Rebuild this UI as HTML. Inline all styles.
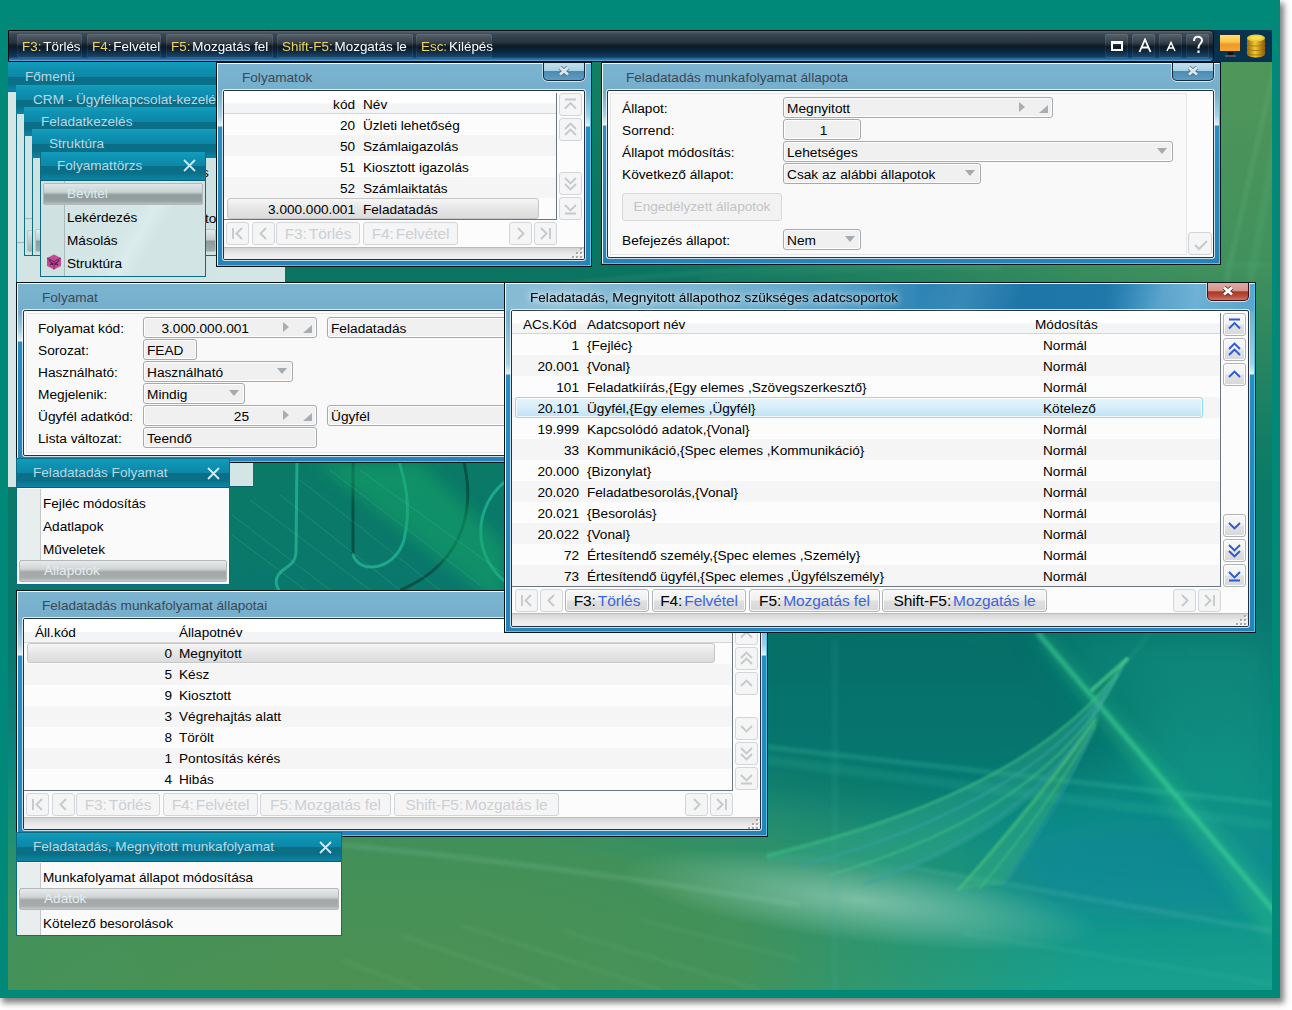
<!DOCTYPE html><html><head><meta charset="utf-8"><style>
*{box-sizing:border-box;margin:0;padding:0}
html,body{width:1292px;height:1010px;overflow:hidden;background:#fff;font-family:"Liberation Sans",sans-serif;font-size:13.6px;color:#000}
.a{position:absolute;white-space:nowrap}
#frame{position:absolute;left:0;top:0;width:1280px;height:998px;background:#008878;box-shadow:3px 4px 6px 1px rgba(0,0,0,.5)}
#desk{position:absolute;left:8px;top:30px;width:1264px;height:960px;overflow:hidden;
 background:linear-gradient(180deg,#3f8e55 0%,#2b8a5e 40%,#0b7a6e 62%,#0e8c85 80%,#18a092 100%);}
#tb{position:absolute;z-index:1;left:8px;top:30px;width:1206px;height:32px;border:1px solid #05080c;border-radius:0 4px 4px 0;
 background:linear-gradient(180deg,#5a6874 0%,#3a4854 10%,#27333e 38%,#0c1a26 50%,#0a2640 68%,#0e3a5e 85%,#2a78b0 95%,#60b8e8 100%)}
#tbr{position:absolute;left:1200px;top:30px;width:72px;height:32px;background:#063350}
.tbtn{position:absolute;top:3px;height:24px;border-radius:2px;background:linear-gradient(180deg,rgba(255,255,255,.14),rgba(255,255,255,.05) 45%,rgba(0,0,0,.08) 55%,rgba(255,255,255,.06));box-shadow:inset 0 0 0 1px rgba(255,255,255,.07);color:#fff;font-size:13.4px;line-height:26px;padding-left:5px;white-space:nowrap}
.tbtn b{font-weight:normal;color:#ecd468;margin-right:2px}
.win{position:absolute;border:1px solid #0a1218;
 background:linear-gradient(180deg,#7cb4d0 0px,#74aecb 30px,#a4d0e4 calc(var(--g) - 10px),#e2f2f8 var(--g),#2a8cc0 calc(var(--g) + 1px),#2484b8 100%)}
.win:before{content:"";position:absolute;left:0;top:0;right:0;bottom:0;border:1px solid rgba(255,255,255,.9);border-right-color:#38d0f4;border-bottom-color:#38d0f4}
.ttl{position:absolute;top:6px;color:#3c4856;font-size:13.6px;line-height:17px;white-space:nowrap}
.xb{position:absolute;top:0;width:42px;height:18px;border:1px solid #182838;border-top:none;border-radius:0 0 5px 5px;
 background:linear-gradient(180deg,#c4e0ee 0%,#a8d0e4 45%,#4c8cb4 50%,#5e9cc0 100%);box-shadow:0 1px 0 rgba(255,255,255,.7),-1px 0 0 rgba(255,255,255,.5),1px 0 0 rgba(255,255,255,.5)}
.xb svg{position:absolute;left:13px;top:2px}

.win.act{background:linear-gradient(95deg,#84bad4 0px,#7ab4d0 200px,#5aa2c8 330px,#2c84b4 420px,#1e76a8 520px,#2078aa 600px,#3a90c0 640px,#6cb0d4 690px,#5ca4cc 751px) 0 0/100% 28px no-repeat,linear-gradient(180deg,#7cb4d0 0px,#74aecb 30px,#a4d0e4 calc(var(--g) - 10px),#e2f2f8 var(--g),#2a8cc0 calc(var(--g) + 1px),#2484b8 100%)}
.win.act:after{content:"";position:absolute;left:1px;right:1px;top:1px;height:27px;background:linear-gradient(115deg,rgba(255,255,255,0) 0px,rgba(255,255,255,.12) 60px,rgba(255,255,255,0) 100px,rgba(255,255,255,0) 380px,rgba(255,255,255,.08) 420px,rgba(255,255,255,0) 470px,rgba(255,255,255,0) 560px,rgba(255,255,255,.1) 600px,rgba(255,255,255,0) 640px)}
.win.act .ttl{color:#000;text-shadow:0 0 6px rgba(255,255,255,.9),0 0 10px rgba(255,255,255,.6);z-index:2}
.win.act .xb{background:linear-gradient(180deg,#e0aaa4 0%,#d4958c 45%,#a83828 52%,#b84a38 75%,#c87868 100%);border-color:#401010;z-index:2}


.pnl{position:absolute;background:#fcfcfc;border:1px solid #26323e;border-radius:2px;box-shadow:0 0 0 1px rgba(255,255,255,.75);overflow:hidden}
.hd{position:absolute;left:0;top:0;height:23px;border-bottom:1px solid #d6d6d6;background:linear-gradient(180deg,#fff 0,#fff 55%,#f3f4f6 58%,#f3f4f6 100%)}
.rw{position:absolute;left:0;height:21px}
.r0{background:#fcfcfc}.r1{background:#f5f5f5}
.t{position:absolute;white-space:nowrap;line-height:21px;margin-top:1px;font-size:13.6px;color:#000}
.rt{text-align:right}
.sel{position:absolute;border:1px solid #c6c6c6;border-radius:3px;background:linear-gradient(180deg,#f6f6f6 0%,#e6e6e6 50%,#dcdcdc 100%)}
.selb{position:absolute;border:1px solid #90d8f8;border-radius:3px;background:linear-gradient(180deg,#e6f4fc 0%,#d8eefa 50%,#bee2f6 100%);box-shadow:inset 0 0 0 1px rgba(255,255,255,.8)}
.vl{position:absolute;width:1px;background:#6c7680}
.hl{position:absolute;height:1px;background:#6c7680}
.bt{position:absolute;width:23px;height:23px;border:1px solid #d2d6da;border-radius:3px;background:#f5f5f5}
.bt svg{position:absolute;left:0;top:0}
.bt.ac{border-color:#b0b4b8;background:linear-gradient(180deg,#f8f8f8 0%,#f2f2f2 48%,#e2e2e2 52%,#d8d8d8 100%);box-shadow:inset 0 0 0 1px rgba(255,255,255,.9)}
.nb{position:absolute;height:23px;border:1px solid #d2d6da;border-radius:3px;background:#f5f5f5;color:#ccd0d4;font-size:15.5px;line-height:21px;text-align:center;white-space:nowrap;letter-spacing:-.1px}
.nb.ac{border-color:#b0b4b8;background:linear-gradient(180deg,#f8f8f8 0%,#f0f0f0 48%,#e0e0e0 52%,#d6d6d6 100%);color:#000;box-shadow:inset 0 0 0 1px rgba(255,255,255,.8)}
.nb.ac i{color:#3c64dc;font-style:normal}
.nb i{font-style:normal;margin-left:2px}
.stb{position:absolute;left:0;height:13px;border-top:1px solid #bcbcbc;background:linear-gradient(180deg,#d4d4d4 0%,#ececec 60%,#f0f0f0 100%)}
.frm{position:absolute;border:1px solid #e6e6e6;background:#f9f9f9}
.lb{position:absolute;white-space:nowrap;font-size:13.7px;line-height:20px;margin-top:1px}
.fd{position:absolute;height:21px;margin-top:-1px;border:1px solid #a6aaae;border-radius:3px;background:#f0f0f0;box-shadow:inset 0 0 0 1px #fff;font-size:13.7px;line-height:18px;padding-top:2px;padding-left:3px;white-space:nowrap;overflow:hidden}
.dd:after{content:"";position:absolute;right:5px;top:6px;border-left:5.5px solid transparent;border-right:5.5px solid transparent;border-top:6px solid #a4aaae}
.lk .ar{position:absolute;right:27px;top:4px;border-top:5px solid transparent;border-bottom:5px solid transparent;border-left:6px solid #a8aeb2}
.lk .cr{position:absolute;right:4px;top:7px;width:0;height:0;border-left:9px solid transparent;border-bottom:8px solid #a8aeb2}
.mn{position:absolute;border:1px solid #0b6c84;background:#fafafa}
.mh{position:absolute;left:0;top:0;right:0;height:29px;background:linear-gradient(180deg,#139dbc 0%,#0f93b3 18%,#0c87a7 50%,#0a6e87 52%,#0a6f88 76%,#0b7b97 86%,#0c84a2 100%);border-bottom:1px solid #0a6078}
.mt{position:absolute;top:0;line-height:28px;color:#b8d8e6;font-size:13.6px;white-space:nowrap}
.mx{position:absolute;top:7px;width:13px;height:13px}
.ic{position:absolute;left:0;width:24px;background:#e8eeee;border-right:1px solid #c4c8c8}
.mi{position:absolute;white-space:nowrap;font-size:13.6px;line-height:23px}
.sh{background:linear-gradient(180deg,#139dbc 0%,#0f93b3 18%,#0c87a7 50%,#0a6e87 52%,#0a6f88 76%,#0b7b97 86%,#0c84a2 100%)}
.msel{position:absolute;border:1px solid #b4b8b8;border-radius:2px;background:linear-gradient(180deg,#e6eaea 0%,#d0d4d4 40%,#a4a8a8 55%,#a8acac 85%,#c4c8c8 100%);color:#e4eef0;font-size:13.6px;line-height:20px;white-space:nowrap}
</style></head><body>
<div id="frame"></div><div id="desk"></div>
<svg class="a" style="left:8px;top:30px" width="1264" height="960" viewBox="8 30 1264 960">
<defs>
<linearGradient id="bg1" x1="0" y1="0" x2="0" y2="1">
<stop offset="0" stop-color="#0c7c62"/><stop offset=".26" stop-color="#0b7460"/><stop offset=".45" stop-color="#0a7a66"/>
<stop offset=".64" stop-color="#0a7670"/><stop offset=".80" stop-color="#0c8a82"/><stop offset="1" stop-color="#18a08e"/></linearGradient>
<radialGradient id="gtr" cx="0" cy="0" r="1" gradientUnits="userSpaceOnUse" gradientTransform="translate(1230 60) rotate(8) scale(720 420)"><stop offset="0" stop-color="#50965a" stop-opacity="1"/><stop offset=".5" stop-color="#4a955c" stop-opacity=".85"/><stop offset="1" stop-color="#3a9060" stop-opacity="0"/></radialGradient>
<radialGradient id="gl" cx="0" cy="0" r="1" gradientUnits="userSpaceOnUse" gradientTransform="translate(330 1010) rotate(-6) scale(760 300)"><stop offset="0" stop-color="#4e9050" stop-opacity="1"/><stop offset=".55" stop-color="#4a9052" stop-opacity=".85"/><stop offset="1" stop-color="#3a9058" stop-opacity="0"/></radialGradient>
<radialGradient id="hz" cx=".5" cy=".5" r=".5"><stop offset="0" stop-color="#c8eadc" stop-opacity=".5"/><stop offset="1" stop-color="#d0f0e0" stop-opacity="0"/></radialGradient>
<linearGradient id="gr" x1="0" y1="0" x2="1" y2="0"><stop offset="0" stop-color="#38c080" stop-opacity="0"/><stop offset=".5" stop-color="#38c080" stop-opacity=".9"/><stop offset="1" stop-color="#38c080" stop-opacity="0"/></linearGradient>
<filter id="bl" x="-20%" y="-20%" width="140%" height="140%"><feGaussianBlur stdDeviation="2"/></filter>
<filter id="bl1" x="-20%" y="-20%" width="140%" height="140%"><feGaussianBlur stdDeviation="1"/></filter><filter id="bl20" x="-50%" y="-50%" width="200%" height="200%"><feGaussianBlur stdDeviation="20"/></filter>
<filter id="bl6" x="-20%" y="-50%" width="140%" height="200%"><feGaussianBlur stdDeviation="8"/></filter>
</defs>
<rect x="8" y="30" width="1264" height="960" fill="url(#bg1)"/>
<rect x="8" y="30" width="1264" height="960" fill="url(#gtr)"/>
<rect x="8" y="30" width="1264" height="960" fill="url(#gl)"/>
<ellipse cx="900" cy="700" rx="260" ry="110" fill="#06665e" opacity=".45" filter="url(#bl20)"/>
<ellipse cx="1160" cy="870" rx="160" ry="50" fill="#0880a0" opacity=".45" filter="url(#bl20)"/>
<path d="M1040 632 L1272 632 L1272 915z" fill="#18a088" opacity=".35" filter="url(#bl20)"/>
<ellipse cx="0" cy="0" rx="1" ry="1" fill="url(#hz)" transform="translate(860 900) rotate(7) scale(240 42)"/>
<g filter="url(#bl)" fill="none">
<path d="M1276 60 L1226 282" stroke="#78d098" stroke-width="2" opacity=".35"/>
<path d="M1280 120 L1250 282" stroke="#60c088" stroke-width="8" opacity=".15"/>
<path d="M560 285 C700 270 850 262 1000 268" stroke="#70c8a0" stroke-width="2" opacity=".3"/>
<path d="M700 280 C850 268 1000 262 1272 265" stroke="#70c8a0" stroke-width="1.5" opacity=".25"/>
<path d="M1034 632 L1044 632 L1280 900 L1280 950 z" fill="#30c888" opacity=".35" filter="url(#bl6)"/>
<path d="M1150 632 L1098 700" stroke="#40c890" stroke-width="2" opacity=".3"/>
<path d="M1037 632 L1280 918" stroke="#48e098" stroke-width="3" opacity=".85"/>
<path d="M767 747 L1272 804" stroke="#48c8a8" stroke-width="2" opacity=".6"/>
<path d="M767 760 L1272 825" stroke="#40c0a0" stroke-width="10" opacity=".15"/>
<path d="M904 866 L1272 931" stroke="#90e0d0" stroke-width="1.5" opacity=".4"/>
<path d="M962 933 L1272 984" stroke="#90e0d0" stroke-width="1.2" opacity=".3"/>
<path d="M342 845 C500 860 650 880 800 905" stroke="#a8e0c8" stroke-width="3" opacity=".25"/>
<path d="M400 935 L560 990" stroke="#a0d8b0" stroke-width="1.2" opacity=".35"/>
<path d="M460 925 L660 990" stroke="#a0d8b0" stroke-width="1.2" opacity=".3"/>
<path d="M560 930 L760 990" stroke="#a0d8b0" stroke-width="1.2" opacity=".3"/>
<path d="M640 920 L800 960" stroke="#a0d8b0" stroke-width="1.2" opacity=".3"/>
<path d="M342 960 L420 990" stroke="#a0d8b0" stroke-width="1.2" opacity=".3"/>
<path d="M835 640 L835 990" stroke="#40b0a0" stroke-width="6" opacity=".15"/>
</g>
<path d="M1127 659 Q1040 790 767 852 L767 862 Q900 860 870 884 Q1060 820 1108 690z" fill="#3aae90" opacity=".35" filter="url(#bl1)"/>
<path d="M1100 712 Q1040 790 958 890 L1005 884 Q1060 800 1096 730z" fill="#48b880" opacity=".35" filter="url(#bl1)"/>
<g fill="none" filter="url(#bl1)" stroke-linecap="round">
<path d="M1127 659 Q1040 790 767 856" stroke="#40c080" stroke-width="3" opacity=".55"/>
<path d="M1122 668 Q1045 800 800 866" stroke="#3aa0a8" stroke-width="3" opacity=".5"/>
<path d="M1118 675 Q1050 810 830 875" stroke="#48c888" stroke-width="2.5" opacity=".5"/>
<path d="M1112 682 Q1055 815 865 884" stroke="#3a98b0" stroke-width="2.5" opacity=".45"/>
<path d="M1127 659 L1092 690" stroke="#60d890" stroke-width="4" opacity=".6"/>
<path d="M1095 720 Q1040 800 958 890" stroke="#50c878" stroke-width="3" opacity=".55"/>
<path d="M1095 725 Q1050 805 980 888" stroke="#48c080" stroke-width="2.5" opacity=".5"/>
<path d="M1092 730 Q1060 810 1005 884" stroke="#2a90b0" stroke-width="2.5" opacity=".5"/>
</g>
<g fill="none" stroke-linecap="round">
<path d="M297 455 L296 553 C295 566 285 566 279 574 C274 580 276 586 280 592" stroke="#22b090" stroke-width="3" opacity=".85"/>
<path d="M353 455 L353 555" stroke="#054a3c" stroke-width="3" opacity=".8"/>
<path d="M353 555 C360 575 395 570 404 540 C412 505 405 480 397 455" stroke="#22b090" stroke-width="3" opacity=".85"/>
<path d="M462 455 C475 500 470 560 401 590" stroke="#054a3c" stroke-width="3" opacity=".8"/>
<path d="M510 478 C470 505 472 560 510 585" stroke="#22b090" stroke-width="3" opacity=".85"/>
</g>
<path d="M315 462 L505 610 L505 545 L420 462z" fill="#18a868" opacity=".5" filter="url(#bl6)"/>
<g stroke="#60d0a0" stroke-width="1" opacity=".22">
<path d="M232 515 L330 590"/><path d="M232 535 L305 590"/><path d="M250 500 L370 590"/><path d="M280 495 L400 590"/><path d="M300 480 L440 590"/><path d="M330 470 L480 585"/><path d="M360 470 L505 575"/>
</g>
</svg>
<div id="tb">
<div class="tbtn" style="left:8px;width:65px"><b>F3:</b>Törlés</div>
<div class="tbtn" style="left:78px;width:74px"><b>F4:</b>Felvétel</div>
<div class="tbtn" style="left:157px;width:107px"><b>F5:</b>Mozgatás fel</div>
<div class="tbtn" style="left:268px;width:136px"><b>Shift-F5:</b>Mozgatás le</div>
<div class="tbtn" style="left:407px;width:76px"><b>Esc:</b>Kilépés</div>
<div class="tbtn" style="left:1096px;width:23px"></div>
<div class="tbtn" style="left:1123px;width:23px"></div>
<div class="tbtn" style="left:1150px;width:23px"></div>
<div class="tbtn" style="left:1177px;width:23px"></div>
<div class="a" style="left:1102px;top:10px;width:12px;height:10px;border:2px solid #fff;border-top-width:3px"></div>
<svg class="a" style="left:1129px;top:7px" width="14" height="15" viewBox="0 0 14 15"><path d="M1.5 14L7 1.5 12.5 14M3.8 9.5h6.4" stroke="#fff" stroke-width="1.8" fill="none"/></svg>
<svg class="a" style="left:1157px;top:10px" width="10" height="11" viewBox="0 0 10 11"><path d="M1 10L5 1.5 9 10M2.6 7h4.8" stroke="#fff" stroke-width="1.5" fill="none"/></svg>
<svg class="a" style="left:1182px;top:4px" width="14" height="20" viewBox="0 0 14 20"><path d="M3 6c0-3 2-4.3 4-4.3s4 1.3 4 3.8c0 2.8-3.5 3.5-3.5 6.8v1.2" stroke="#fff" stroke-width="2" fill="none"/><rect x="6.4" y="15.5" width="2.2" height="2.4" fill="#fff"/></svg>
</div><div id="tbr"></div>
<div class="a" style="left:1219px;top:34px;width:22px;height:18px;background:#2a2a2a;border-radius:1px"></div>
<div class="a" style="left:1220px;top:35px;width:20px;height:16px;background:linear-gradient(180deg,#ffe070 0%,#f8c850 40%,#f09828 60%,#f8a830 100%)"></div>
<div class="a" style="left:1228px;top:52px;width:5px;height:3px;background:#111"></div>
<div class="a" style="left:1225px;top:55px;width:11px;height:2px;background:#555"></div>
<svg class="a" style="left:1246px;top:34px" width="20" height="24" viewBox="0 0 20 24"><defs><linearGradient id="dbg" x1="0" x2="1"><stop offset="0" stop-color="#9a6808"/><stop offset=".45" stop-color="#f0c830"/><stop offset="1" stop-color="#8a5a06"/></linearGradient></defs><path d="M1 4v16c0 2 4 3.5 9 3.5s9-1.5 9-3.5V4z" fill="url(#dbg)"/><ellipse cx="10" cy="4" rx="9" ry="3.5" fill="#e8c840"/><ellipse cx="10" cy="3.6" rx="6" ry="2.2" fill="#f8e048"/><path d="M1 9c0 2 4 3 9 3s9-1 9-3M1 13.5c0 2 4 3 9 3s9-1 9-3M1 18c0 2 4 3 9 3s9-1 9-3" stroke="#a07010" stroke-width=".8" fill="none"/></svg>
<div class="a" style="left:8px;top:92px;width:277px;height:191px;background:#d4e5e5"></div>
<div class="a" style="left:8px;top:92px;width:8px;height:395px;background:#d6e6e6"></div>
<div class="a" style="left:229px;top:462px;width:24px;height:25px;background:#d4e5e5;border-bottom:1px solid #0a6070"></div>
<div class="a" style="left:16px;top:114px;width:200px;height:170px;background:#d2e4e4;border-left:1px solid #0b6f86"></div>
<div class="a" style="left:17px;top:242px;width:7px;height:1px;background:#a8b4b4"></div>
<div class="a" style="left:24px;top:136px;width:192px;height:120px;background:#d0e3e3;border-left:1px solid #0b6f86;border-bottom:1px solid #0b6f86"></div>
<div class="a" style="left:27px;top:230px;width:10px;height:22px;border:1px solid #b8c0c0;border-radius:2px;background:linear-gradient(180deg,#e0e6e6,#a8b0b0)"></div>
<div class="a" style="left:25px;top:218px;width:7px;height:1px;background:#a8b4b4"></div>
<div class="a" style="left:32px;top:158px;width:184px;height:98px;background:#cfe2e2;border-left:1px solid #0b6f86;border-bottom:1px solid #0b6f86"></div>
<div class="a" style="left:35px;top:229px;width:181px;height:23px;border:1px solid #b8c0c0;border-radius:2px;background:linear-gradient(180deg,#e4eaea 0%,#c4cccc 45%,#8e9a9a 55%,#a0aaaa 100%)"></div>
<div class="a" style="left:205px;top:209px;font-size:13.6px;line-height:20px;color:#000">to</div>
<div class="a" style="left:202px;top:163px;font-size:13.6px;line-height:20px;color:#000">s</div>
<div class="a sh" style="left:8px;top:62px;width:208px;height:29px;overflow:hidden"><div class="mt" style="left:17px;top:1px">Főmenü</div></div>
<div class="a sh" style="left:16px;top:85px;width:200px;height:29px;overflow:hidden"><div class="mt" style="left:17px;top:1px">CRM - Ügyfélkapcsolat-kezelés</div></div>
<div class="a sh" style="left:24px;top:107px;width:192px;height:29px;overflow:hidden"><div class="mt" style="left:17px;top:1px">Feladatkezelés</div></div>
<div class="a sh" style="left:32px;top:129px;width:184px;height:29px;overflow:hidden"><div class="mt" style="left:17px;top:1px">Struktúra</div></div>
<div class="mn" style="left:40px;top:151px;width:166px;height:126px;background:linear-gradient(120deg,#d2e4e4 0%,#d4e6e6 55%,#dcecec 62%,#d2e4e4 70%)">
<div class="mh"></div><div class="mt" style="left:16px">Folyamattörzs</div><svg class="mx" style="left:142px" viewBox="0 0 13 13"><path d="M1 1l11 11M12 1L1 12" stroke="#d0e8f2" stroke-width="1.8"/></svg>
<div class="ic" style="top:29px;height:95px;background:#cfe1e1;border-right-color:#a8baba"></div>
<div class="msel" style="left:2px;top:31px;width:160px;height:22px;padding-left:23px;background:linear-gradient(180deg,#e0e8e8 0%,#c8d2d2 40%,#909c9c 55%,#96a2a2 85%,#b4c0c0 100%);color:#d8ecf0">Bevitel</div>
<div class="mi" style="left:26px;top:54px">Lekérdezés</div><div class="mi" style="left:26px;top:77px">Másolás</div><div class="mi" style="left:26px;top:100px">Struktúra</div>
<svg class="a" style="left:5px;top:102px" width="16" height="16" viewBox="0 0 16 16"><path d="M8 0.5L15 4v8l-7 3.5L1 12V4z" fill="#c04c94"/><path d="M1 4l7 3.5L15 4M8 7.5v8" stroke="#7a2060" stroke-width="1" fill="none"/><path d="M3 6l4 5M13 6l-4 5M4 11l3-2M12 11l-3-2" stroke="#5a1848" stroke-width="1.2"/></svg>
</div>
<div class="win" style="left:216px;top:62px;width:376px;height:205px;--g:63px">
<div class="ttl" style="left:25px">Folyamatok</div>
<div class="xb" style="left:326px"><svg width="14" height="12" viewBox="0 0 14 12"><path d="M3 2.5l8 7M11 2.5l-8 7" stroke="#4a6a80" stroke-width="4.6" opacity=".75"/><path d="M3 2.5l8 7M11 2.5l-8 7" stroke="#dce8ee" stroke-width="2.8"/></svg></div>
<div class="pnl" style="left:6px;top:27px;width:362px;height:170px">
<div class="hd" style="width:332px"></div>
<div class="t rt" style="left:0;width:131px;top:2px">kód</div><div class="t" style="left:139px;top:2px">Név</div>
<div class="rw r0" style="top:23px;width:332px"></div>
<div class="t rt" style="left:0;width:131px;top:23px">20</div><div class="t" style="left:139px;top:23px">Üzleti lehetőség</div>
<div class="rw r1" style="top:44px;width:332px"></div>
<div class="t rt" style="left:0;width:131px;top:44px">50</div><div class="t" style="left:139px;top:44px">Számlaigazolás</div>
<div class="rw r0" style="top:65px;width:332px"></div>
<div class="t rt" style="left:0;width:131px;top:65px">51</div><div class="t" style="left:139px;top:65px">Kiosztott igazolás</div>
<div class="rw r1" style="top:86px;width:332px"></div>
<div class="t rt" style="left:0;width:131px;top:86px">52</div><div class="t" style="left:139px;top:86px">Számlaiktatás</div>
<div class="rw r0" style="top:107px;width:332px"></div>
<div class="sel" style="left:3px;top:107px;width:312px;height:21px"></div>
<div class="t rt" style="left:0;width:131px;top:107px">3.000.000.001</div><div class="t" style="left:139px;top:107px">Feladatadás</div>
<div class="vl" style="left:332px;top:2px;height:126px"></div>
<div class="hl" style="left:0;top:128px;width:333px"></div>
<div class="bt" style="left:335px;top:2px"><svg width="21" height="21" viewBox="0 0 21 21"><path d="M5 5.5h11M5 14.5l5.5-5.5 5.5 5.5" fill="none" stroke="#c4cacd" stroke-width="1.9"/></svg></div><div class="bt" style="left:335px;top:27px"><svg width="21" height="21" viewBox="0 0 21 21"><path d="M5 10l5.5-5.5L16 10M5 16l5.5-5.5L16 16" fill="none" stroke="#c4cacd" stroke-width="1.9"/></svg></div><div class="bt" style="left:335px;top:81px"><svg width="21" height="21" viewBox="0 0 21 21"><path d="M5 5l5.5 5.5L16 5M5 11l5.5 5.5L16 11" fill="none" stroke="#c4cacd" stroke-width="1.9"/></svg></div><div class="bt" style="left:335px;top:106px"><svg width="21" height="21" viewBox="0 0 21 21"><path d="M5 7l5.5 5.5L16 7M5 15.5h11" fill="none" stroke="#c4cacd" stroke-width="1.9"/></svg></div>
<div class="bt" style="left:2px;top:131px"><svg width="21" height="21" viewBox="0 0 21 21"><path d="M6 5v11M15 5l-5.5 5.5L15 16" fill="none" stroke="#c4cacd" stroke-width="1.9"/></svg></div><div class="bt" style="left:28px;top:131px"><svg width="21" height="21" viewBox="0 0 21 21"><path d="M13 5l-5.5 5.5L13 16" fill="none" stroke="#c4cacd" stroke-width="1.9"/></svg></div>
<div class="nb" style="left:52px;top:131px;width:84px">F3:<i>Törlés</i></div><div class="nb" style="left:139px;top:131px;width:95px">F4:<i>Felvétel</i></div>
<div class="bt" style="left:285px;top:131px"><svg width="21" height="21" viewBox="0 0 21 21"><path d="M8 5l5.5 5.5L8 16" fill="none" stroke="#c4cacd" stroke-width="1.9"/></svg></div><div class="bt" style="left:310px;top:131px"><svg width="21" height="21" viewBox="0 0 21 21"><path d="M15 5v11M6 5l5.5 5.5L6 16" fill="none" stroke="#c4cacd" stroke-width="1.9"/></svg></div>
<div class="stb" style="top:156px;width:360px;height:12px"></div><div class="a" style="left:356px;top:157px;width:2px;height:2px;background:#a8a8a8;box-shadow:1px 1px 0 #fff"></div><div class="a" style="left:352px;top:161px;width:2px;height:2px;background:#a8a8a8;box-shadow:1px 1px 0 #fff"></div><div class="a" style="left:356px;top:161px;width:2px;height:2px;background:#a8a8a8;box-shadow:1px 1px 0 #fff"></div><div class="a" style="left:348px;top:165px;width:2px;height:2px;background:#a8a8a8;box-shadow:1px 1px 0 #fff"></div><div class="a" style="left:352px;top:165px;width:2px;height:2px;background:#a8a8a8;box-shadow:1px 1px 0 #fff"></div><div class="a" style="left:356px;top:165px;width:2px;height:2px;background:#a8a8a8;box-shadow:1px 1px 0 #fff"></div>
</div></div>
<div class="win" style="left:601px;top:62px;width:620px;height:203px;--g:62px">
<div class="ttl" style="left:24px">Feladatadás munkafolyamat állapota</div>
<div class="xb" style="left:570px"><svg width="14" height="12" viewBox="0 0 14 12"><path d="M3 2.5l8 7M11 2.5l-8 7" stroke="#4a6a80" stroke-width="4.6" opacity=".75"/><path d="M3 2.5l8 7M11 2.5l-8 7" stroke="#dce8ee" stroke-width="2.8"/></svg></div>
<div class="pnl" style="left:5px;top:27px;width:607px;height:168px">
<div class="frm" style="left:2px;top:2px;width:577px;height:162px"></div>
<div class="lb" style="left:14px;top:7px">Állapot:</div>
<div class="lb" style="left:14px;top:29px">Sorrend:</div>
<div class="lb" style="left:14px;top:51px">Állapot módosítás:</div>
<div class="lb" style="left:14px;top:73px">Következő állapot:</div>
<div class="lb" style="left:14px;top:139px">Befejezés állapot:</div>
<div class="fd lk" style="left:175px;top:7px;width:270px">Megnyitott<span class="ar"></span><span class="cr"></span></div>
<div class="fd" style="left:175px;top:29px;width:78px;text-align:center">1</div>
<div class="fd dd" style="left:175px;top:51px;width:390px">Lehetséges</div>
<div class="fd dd" style="left:175px;top:73px;width:198px">Csak az alábbi állapotok</div>
<div class="a" style="left:14px;top:102px;width:160px;height:28px;border:1px solid #d8d8d8;border-radius:3px;background:#f2f2f2;color:#c4c4c4;font-size:13.6px;line-height:26px;text-align:center">Engedélyzett állapotok</div>
<div class="fd dd" style="left:175px;top:139px;width:78px">Nem</div>
<div class="a" style="left:580px;top:141px;width:24px;height:23px;border:1px solid #d0d4d8;border-radius:3px;background:#f5f5f5"><svg width="22" height="22" viewBox="0 0 22 22"><path d="M6 12l4 4 8-8" fill="none" stroke="#c4cacd" stroke-width="2"/></svg></div>
</div></div>
<div class="win" style="left:16px;top:282px;width:500px;height:181px;--g:58px">
<div class="ttl" style="left:25px">Folyamat</div>
<div class="pnl" style="left:6px;top:27px;width:490px;height:146px">
<div class="frm" style="left:2px;top:2px;width:484px;height:140px"></div>
<div class="lb" style="left:14px;top:7px">Folyamat kód:</div>
<div class="lb" style="left:14px;top:29px">Sorozat:</div>
<div class="lb" style="left:14px;top:51px">Használható:</div>
<div class="lb" style="left:14px;top:73px">Megjelenik:</div>
<div class="lb" style="left:14px;top:95px">Ügyfél adatkód:</div>
<div class="lb" style="left:14px;top:117px">Lista változat:</div>
<div class="fd lk" style="left:119px;top:7px;width:174px;text-align:right;padding-right:67px">3.000.000.001<span class="ar"></span><span class="cr"></span></div>
<div class="fd" style="left:303px;top:7px;width:200px">Feladatadás</div>
<div class="fd" style="left:119px;top:29px;width:54px">FEAD</div>
<div class="fd dd" style="left:119px;top:51px;width:150px">Használható</div>
<div class="fd dd" style="left:119px;top:73px;width:102px">Mindig</div>
<div class="fd lk" style="left:119px;top:95px;width:174px;text-align:right;padding-right:67px">25<span class="ar"></span><span class="cr"></span></div>
<div class="fd" style="left:303px;top:95px;width:200px">Ügyfél</div>
<div class="fd" style="left:119px;top:117px;width:174px">Teendő</div>
</div></div>
<div class="win" style="left:16px;top:590px;width:752px;height:247px;--g:64px">
<div class="ttl" style="left:25px">Feladatadás munkafolyamat állapotai</div>
<div class="pnl" style="left:6px;top:27px;width:738px;height:212px">
<div class="hd" style="width:708px;height:24px"></div>
<div class="t" style="left:11px;top:2px">Áll.kód</div><div class="t" style="left:155px;top:2px">Állapotnév</div>
<div class="rw r0" style="top:24px;width:708px"></div>
<div class="sel" style="left:3px;top:24px;width:688px;height:20px"></div>
<div class="t rt" style="left:0;width:148px;top:23px">0</div><div class="t" style="left:155px;top:23px">Megnyitott</div>
<div class="rw r1" style="top:45px;width:708px"></div>
<div class="t rt" style="left:0;width:148px;top:44px">5</div><div class="t" style="left:155px;top:44px">Kész</div>
<div class="rw r0" style="top:66px;width:708px"></div>
<div class="t rt" style="left:0;width:148px;top:65px">9</div><div class="t" style="left:155px;top:65px">Kiosztott</div>
<div class="rw r1" style="top:87px;width:708px"></div>
<div class="t rt" style="left:0;width:148px;top:86px">3</div><div class="t" style="left:155px;top:86px">Végrehajtás alatt</div>
<div class="rw r0" style="top:108px;width:708px"></div>
<div class="t rt" style="left:0;width:148px;top:107px">8</div><div class="t" style="left:155px;top:107px">Törölt</div>
<div class="rw r1" style="top:129px;width:708px"></div>
<div class="t rt" style="left:0;width:148px;top:128px">1</div><div class="t" style="left:155px;top:128px">Pontosítás kérés</div>
<div class="rw r0" style="top:150px;width:708px"></div>
<div class="t rt" style="left:0;width:148px;top:149px">4</div><div class="t" style="left:155px;top:149px">Hibás</div>
<div class="vl" style="left:708px;top:2px;height:169px"></div>
<div class="hl" style="left:0;top:171px;width:709px"></div>
<div class="bt" style="left:711px;top:3px"><svg width="21" height="21" viewBox="0 0 21 21"><path d="M5 5.5h11M5 14.5l5.5-5.5 5.5 5.5" fill="none" stroke="#c4cacd" stroke-width="1.9"/></svg></div><div class="bt" style="left:711px;top:28px"><svg width="21" height="21" viewBox="0 0 21 21"><path d="M5 10l5.5-5.5L16 10M5 16l5.5-5.5L16 16" fill="none" stroke="#c4cacd" stroke-width="1.9"/></svg></div><div class="bt" style="left:711px;top:53px"><svg width="21" height="21" viewBox="0 0 21 21"><path d="M5 13l5.5-5.5L16 13" fill="none" stroke="#c4cacd" stroke-width="1.9"/></svg></div><div class="bt" style="left:711px;top:98px"><svg width="21" height="21" viewBox="0 0 21 21"><path d="M5 8l5.5 5.5L16 8" fill="none" stroke="#c4cacd" stroke-width="1.9"/></svg></div><div class="bt" style="left:711px;top:123px"><svg width="21" height="21" viewBox="0 0 21 21"><path d="M5 5l5.5 5.5L16 5M5 11l5.5 5.5L16 11" fill="none" stroke="#c4cacd" stroke-width="1.9"/></svg></div><div class="bt" style="left:711px;top:148px"><svg width="21" height="21" viewBox="0 0 21 21"><path d="M5 7l5.5 5.5L16 7M5 15.5h11" fill="none" stroke="#c4cacd" stroke-width="1.9"/></svg></div>
<div class="bt" style="left:2px;top:174px"><svg width="21" height="21" viewBox="0 0 21 21"><path d="M6 5v11M15 5l-5.5 5.5L15 16" fill="none" stroke="#c4cacd" stroke-width="1.9"/></svg></div><div class="bt" style="left:28px;top:174px"><svg width="21" height="21" viewBox="0 0 21 21"><path d="M13 5l-5.5 5.5L13 16" fill="none" stroke="#c4cacd" stroke-width="1.9"/></svg></div>
<div class="nb" style="left:52px;top:174px;width:84px">F3:<i>Törlés</i></div><div class="nb" style="left:139px;top:174px;width:95px">F4:<i>Felvétel</i></div><div class="nb" style="left:236px;top:174px;width:131px">F5:<i>Mozgatás fel</i></div><div class="nb" style="left:370px;top:174px;width:165px">Shift-F5:<i>Mozgatás le</i></div>
<div class="bt" style="left:661px;top:174px"><svg width="21" height="21" viewBox="0 0 21 21"><path d="M8 5l5.5 5.5L8 16" fill="none" stroke="#c4cacd" stroke-width="1.9"/></svg></div><div class="bt" style="left:686px;top:174px"><svg width="21" height="21" viewBox="0 0 21 21"><path d="M15 5v11M6 5l5.5 5.5L6 16" fill="none" stroke="#c4cacd" stroke-width="1.9"/></svg></div>
<div class="stb" style="top:198px;width:736px"></div><div class="a" style="left:732px;top:200px;width:2px;height:2px;background:#a8a8a8;box-shadow:1px 1px 0 #fff"></div><div class="a" style="left:728px;top:204px;width:2px;height:2px;background:#a8a8a8;box-shadow:1px 1px 0 #fff"></div><div class="a" style="left:732px;top:204px;width:2px;height:2px;background:#a8a8a8;box-shadow:1px 1px 0 #fff"></div><div class="a" style="left:724px;top:208px;width:2px;height:2px;background:#a8a8a8;box-shadow:1px 1px 0 #fff"></div><div class="a" style="left:728px;top:208px;width:2px;height:2px;background:#a8a8a8;box-shadow:1px 1px 0 #fff"></div><div class="a" style="left:732px;top:208px;width:2px;height:2px;background:#a8a8a8;box-shadow:1px 1px 0 #fff"></div>
</div></div>
<div class="win act" style="left:504px;top:282px;width:752px;height:351px;--g:91px">
<div class="ttl" style="left:25px">Feladatadás, Megnyitott állapothoz szükséges adatcsoportok</div>
<div class="xb" style="left:702px"><svg width="14" height="12" viewBox="0 0 14 12"><path d="M3 2.5l8 7M11 2.5l-8 7" stroke="#502018" stroke-width="4.6" opacity=".75"/><path d="M3 2.5l8 7M11 2.5l-8 7" stroke="#ffffff" stroke-width="2.8"/></svg></div>
<div class="pnl" style="left:6px;top:27px;width:738px;height:317px">
<div class="hd" style="width:708px"></div>
<div class="t" style="left:11px;top:2px">ACs.Kód</div><div class="t" style="left:75px;top:2px">Adatcsoport név</div><div class="t" style="left:523px;top:2px">Módosítás</div>
<div class="rw r0" style="top:23px;width:708px"></div>
<div class="t rt" style="left:0;width:67px;top:23px">1</div><div class="t" style="left:75px;top:23px">{Fejléc}</div><div class="t" style="left:531px;top:23px">Normál</div>
<div class="rw r1" style="top:44px;width:708px"></div>
<div class="t rt" style="left:0;width:67px;top:44px">20.001</div><div class="t" style="left:75px;top:44px">{Vonal}</div><div class="t" style="left:531px;top:44px">Normál</div>
<div class="rw r0" style="top:65px;width:708px"></div>
<div class="t rt" style="left:0;width:67px;top:65px">101</div><div class="t" style="left:75px;top:65px">Feladatkiírás,{Egy elemes ,Szövegszerkesztő}</div><div class="t" style="left:531px;top:65px">Normál</div>
<div class="rw r1" style="top:86px;width:708px"></div>
<div class="selb" style="left:3px;top:86px;width:688px;height:21px"></div>
<div class="t rt" style="left:0;width:67px;top:86px">20.101</div><div class="t" style="left:75px;top:86px">Ügyfél,{Egy elemes ,Ügyfél}</div><div class="t" style="left:531px;top:86px">Kötelező</div>
<div class="rw r0" style="top:107px;width:708px"></div>
<div class="t rt" style="left:0;width:67px;top:107px">19.999</div><div class="t" style="left:75px;top:107px">Kapcsolódó adatok,{Vonal}</div><div class="t" style="left:531px;top:107px">Normál</div>
<div class="rw r1" style="top:128px;width:708px"></div>
<div class="t rt" style="left:0;width:67px;top:128px">33</div><div class="t" style="left:75px;top:128px">Kommunikáció,{Spec elemes ,Kommunikáció}</div><div class="t" style="left:531px;top:128px">Normál</div>
<div class="rw r0" style="top:149px;width:708px"></div>
<div class="t rt" style="left:0;width:67px;top:149px">20.000</div><div class="t" style="left:75px;top:149px">{Bizonylat}</div><div class="t" style="left:531px;top:149px">Normál</div>
<div class="rw r1" style="top:170px;width:708px"></div>
<div class="t rt" style="left:0;width:67px;top:170px">20.020</div><div class="t" style="left:75px;top:170px">Feladatbesorolás,{Vonal}</div><div class="t" style="left:531px;top:170px">Normál</div>
<div class="rw r0" style="top:191px;width:708px"></div>
<div class="t rt" style="left:0;width:67px;top:191px">20.021</div><div class="t" style="left:75px;top:191px">{Besorolás}</div><div class="t" style="left:531px;top:191px">Normál</div>
<div class="rw r1" style="top:212px;width:708px"></div>
<div class="t rt" style="left:0;width:67px;top:212px">20.022</div><div class="t" style="left:75px;top:212px">{Vonal}</div><div class="t" style="left:531px;top:212px">Normál</div>
<div class="rw r0" style="top:233px;width:708px"></div>
<div class="t rt" style="left:0;width:67px;top:233px">72</div><div class="t" style="left:75px;top:233px">Értesítendő személy,{Spec elemes ,Személy}</div><div class="t" style="left:531px;top:233px">Normál</div>
<div class="rw r1" style="top:254px;width:708px"></div>
<div class="t rt" style="left:0;width:67px;top:254px">73</div><div class="t" style="left:75px;top:254px">Értesítendő ügyfél,{Spec elemes ,Ügyfélszemély}</div><div class="t" style="left:531px;top:254px">Normál</div>
<div class="vl" style="left:708px;top:2px;height:273px"></div>
<div class="hl" style="left:0;top:275px;width:709px"></div>
<div class="bt ac" style="left:711px;top:2px"><svg width="21" height="21" viewBox="0 0 21 21"><path d="M5 5.5h11M5 14.5l5.5-5.5 5.5 5.5" fill="none" stroke="#2a5ad8" stroke-width="1.9"/></svg></div><div class="bt ac" style="left:711px;top:27px"><svg width="21" height="21" viewBox="0 0 21 21"><path d="M5 10l5.5-5.5L16 10M5 16l5.5-5.5L16 16" fill="none" stroke="#2a5ad8" stroke-width="1.9"/></svg></div><div class="bt ac" style="left:711px;top:52px"><svg width="21" height="21" viewBox="0 0 21 21"><path d="M5 13l5.5-5.5L16 13" fill="none" stroke="#2a5ad8" stroke-width="1.9"/></svg></div><div class="bt ac" style="left:711px;top:203px"><svg width="21" height="21" viewBox="0 0 21 21"><path d="M5 8l5.5 5.5L16 8" fill="none" stroke="#2a5ad8" stroke-width="1.9"/></svg></div><div class="bt ac" style="left:711px;top:228px"><svg width="21" height="21" viewBox="0 0 21 21"><path d="M5 5l5.5 5.5L16 5M5 11l5.5 5.5L16 11" fill="none" stroke="#2a5ad8" stroke-width="1.9"/></svg></div><div class="bt ac" style="left:711px;top:253px"><svg width="21" height="21" viewBox="0 0 21 21"><path d="M5 7l5.5 5.5L16 7M5 15.5h11" fill="none" stroke="#2a5ad8" stroke-width="1.9"/></svg></div>
<div class="bt" style="left:3px;top:278px"><svg width="21" height="21" viewBox="0 0 21 21"><path d="M6 5v11M15 5l-5.5 5.5L15 16" fill="none" stroke="#c4cacd" stroke-width="1.9"/></svg></div><div class="bt" style="left:28px;top:278px"><svg width="21" height="21" viewBox="0 0 21 21"><path d="M13 5l-5.5 5.5L13 16" fill="none" stroke="#c4cacd" stroke-width="1.9"/></svg></div>
<div class="nb ac" style="left:53px;top:278px;width:84px">F3:<i>Törlés</i></div><div class="nb ac" style="left:140px;top:278px;width:94px">F4:<i>Felvétel</i></div><div class="nb ac" style="left:237px;top:278px;width:131px">F5:<i>Mozgatás fel</i></div><div class="nb ac" style="left:370px;top:278px;width:165px">Shift-F5:<i>Mozgatás le</i></div>
<div class="bt" style="left:661px;top:278px"><svg width="21" height="21" viewBox="0 0 21 21"><path d="M8 5l5.5 5.5L8 16" fill="none" stroke="#c4cacd" stroke-width="1.9"/></svg></div><div class="bt" style="left:686px;top:278px"><svg width="21" height="21" viewBox="0 0 21 21"><path d="M15 5v11M6 5l5.5 5.5L6 16" fill="none" stroke="#c4cacd" stroke-width="1.9"/></svg></div>
<div class="stb" style="top:302px;width:736px"></div><div class="a" style="left:732px;top:304px;width:2px;height:2px;background:#a8a8a8;box-shadow:1px 1px 0 #fff"></div><div class="a" style="left:728px;top:308px;width:2px;height:2px;background:#a8a8a8;box-shadow:1px 1px 0 #fff"></div><div class="a" style="left:732px;top:308px;width:2px;height:2px;background:#a8a8a8;box-shadow:1px 1px 0 #fff"></div><div class="a" style="left:724px;top:312px;width:2px;height:2px;background:#a8a8a8;box-shadow:1px 1px 0 #fff"></div><div class="a" style="left:728px;top:312px;width:2px;height:2px;background:#a8a8a8;box-shadow:1px 1px 0 #fff"></div><div class="a" style="left:732px;top:312px;width:2px;height:2px;background:#a8a8a8;box-shadow:1px 1px 0 #fff"></div>
</div></div>
<div class="mn" style="left:16px;top:458px;width:214px;height:127px">
<div class="mh"></div><div class="mt" style="left:16px">Feladatadás Folyamat</div><svg class="mx" style="left:190px;top:8px" viewBox="0 0 13 13"><path d="M1 1l11 11M12 1L1 12" stroke="#d8e8f4" stroke-width="1.8"/></svg>
<div class="ic" style="top:30px;height:71px"></div>
<div class="mi" style="left:26px;top:33px">Fejléc módosítás</div><div class="mi" style="left:26px;top:56px">Adatlapok</div><div class="mi" style="left:26px;top:79px">Műveletek</div>
<div class="msel" style="left:2px;top:101px;width:208px;height:22px;padding-left:24px">Állapotok</div>
</div>
<div class="mn" style="left:16px;top:832px;width:326px;height:104px">
<div class="mh"></div><div class="mt" style="left:16px">Feladatadás, Megnyitott munkafolyamat</div><svg class="mx" style="left:302px;top:8px" viewBox="0 0 13 13"><path d="M1 1l11 11M12 1L1 12" stroke="#d8e8f4" stroke-width="1.8"/></svg>
<div class="ic" style="top:30px;height:25px"></div><div class="ic" style="top:77px;height:25px"></div>
<div class="mi" style="left:26px;top:33px">Munkafolyamat állapot módosítása</div>
<div class="msel" style="left:2px;top:55px;width:320px;height:22px;padding-left:24px">Adatok</div>
<div class="mi" style="left:26px;top:79px">Kötelező besorolások</div>
</div>
</body></html>
